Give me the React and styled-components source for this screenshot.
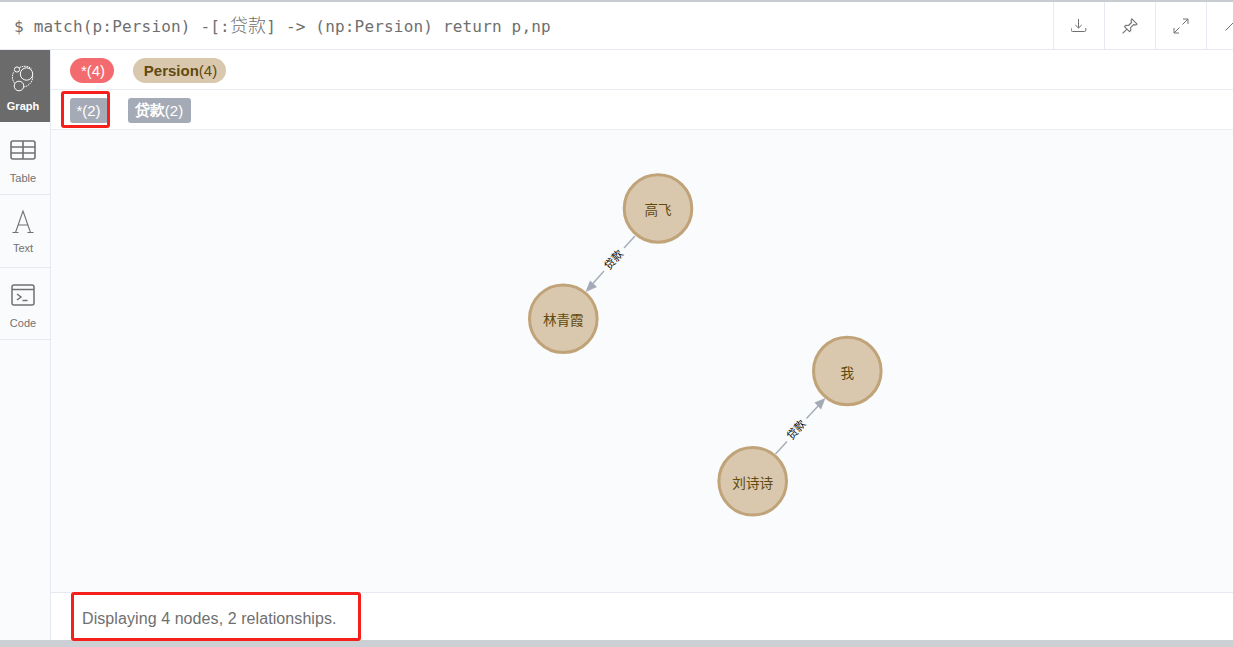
import React from "react";
import styled, { createGlobalStyle } from "styled-components";

const GlobalStyle = createGlobalStyle`
  html, body {
    margin: 0;
    height: 647px;
    overflow: hidden;
    background: #fff;
  }
  body {
    font-family: "Liberation Sans", Arial, sans-serif;
  }
`;

const Frame = styled.div`
  width: 1257px;
  height: 647px;
  display: flex;
  flex-direction: column;
  border-top: 2px solid #c9ccd1;
  border-bottom: 7px solid #ccd0d4;
  box-sizing: border-box;
  background: #fff;
`;

const Header = styled.header`
  height: 47px;
  flex: none;
  display: flex;
  align-items: stretch;
  border-bottom: 1px solid #e6e9ef;
  box-sizing: content-box;
`;

const Query = styled.div`
  flex: 1;
  padding-left: 14px;
  font: 16px/50px "DejaVu Sans Mono", "Noto Sans CJK SC", monospace;
  letter-spacing: 0.18px;
  color: #6f6f6f;
  white-space: nowrap;
`;

const Cjk = styled.span`
  font: 300 18px "Noto Sans CJK SC", sans-serif;
`;

const Action = styled.div`
  width: 50px;
  flex: none;
  display: flex;
  align-items: center;
  justify-content: center;
  border-left: 1px solid #e6e9ef;
  color: #717172;
`;

const Body = styled.div`
  flex: 1;
  min-height: 0;
  display: flex;
`;

const Sidebar = styled.nav`
  width: 51px;
  flex: none;
  box-sizing: border-box;
  background: #f9fbfd;
  border-right: 1px solid #e6e9ef;
`;

const Tab = styled.div`
  height: ${(p) => p.$h}px;
  box-sizing: border-box;
  display: flex;
  flex-direction: column;
  align-items: center;
  padding: ${(p) => p.$top}px 4px 0 0;
  background: ${(p) => (p.$active ? "#6b6b6b" : "transparent")};
  color: ${(p) => (p.$active ? "#fff" : "#717172")};
  border-bottom: ${(p) => (p.$active ? "none" : "1px solid #e6e9ef")};
  svg {
    display: block;
    flex: none;
  }
`;

const TabLabel = styled.span`
  font-size: 11px;
  line-height: 13px;
  margin-top: ${(p) => p.$gap}px;
  font-weight: ${(p) => (p.$active ? 700 : 400)};
`;

const Main = styled.main`
  flex: 1;
  min-width: 0;
  display: flex;
  flex-direction: column;
`;

const LegendRow = styled.div`
  height: 40px;
  flex: none;
  display: flex;
  align-items: center;
  gap: ${(p) => p.$gap}px;
  padding: 2px 0 0 19px;
  box-sizing: border-box;
  border-bottom: 1px solid #e9ecf1;
`;

const Pill = styled.span`
  position: relative;
  height: 25px;
  display: inline-flex;
  align-items: center;
  justify-content: center;
  box-sizing: border-box;
  width: ${(p) => p.$w}px;
  padding: ${(p) => (p.$square ? "0 1px 0 0" : "0 0 0 2px")};
  border-radius: ${(p) => (p.$square ? "3px" : "13px")};
  background: ${(p) => p.$bg};
  color: ${(p) => p.$fg};
  font-size: 15px;
  white-space: nowrap;
  b {
    font-weight: 700;
  }
`;

const PillMarker = styled.i`
  position: absolute;
  left: -9px;
  right: -2px;
  top: -7px;
  bottom: -5px;
  border: 3px solid #f5201c;
  border-radius: 3px;
`;

const Canvas = styled.section`
  flex: 1;
  min-height: 0;
  background: #f9fbfd;
  svg {
    display: block;
    width: 100%;
    height: 100%;
  }
`;

const Footer = styled.footer`
  height: 48px;
  flex: none;
  box-sizing: border-box;
  border-top: 1px solid #e6e9ef;
  padding-left: 31px;
  display: flex;
  align-items: center;
  font-size: 16px;
  letter-spacing: 0.08px;
  color: #6f6f6f;
`;

const Status = styled.span`
  position: relative;
  padding-top: 4px;
`;

const StatusMarker = styled.i`
  position: absolute;
  left: -11px;
  right: -24px;
  top: -14px;
  bottom: -13px;
  border: 3px solid #f5201c;
  border-radius: 3px;
`;

const NodeCircle = styled.circle`
  fill: #d9c8ae;
  stroke: #c0a378;
  stroke-width: 3px;
`;

const NodeText = styled.text`
  font: 13.6px "Noto Sans CJK SC", sans-serif;
  fill: #604a0e;
  text-anchor: middle;
`;

const EdgeLine = styled.line`
  stroke: #a5abb6;
  stroke-width: 1.4px;
`;

const EdgeHead = styled.polygon`
  fill: #a5abb6;
`;

const EdgeText = styled.text`
  font: 11px "Noto Sans CJK SC", sans-serif;
  fill: #000;
  text-anchor: middle;
`;

// canvas starts at page x=51, y=130
const ox = 51;
const oy = 130;

const nodes = [
  { name: "高飞", x: 658, y: 208.5 },
  { name: "林青霞", x: 563.3, y: 318.7 },
  { name: "我", x: 847.3, y: 371 },
  { name: "刘诗诗", x: 752.7, y: 481.3 },
];

const edges = [
  { a: [635, 236], b: [624, 248], c: [604, 271], d: [592, 284.5], head: "585.5,292 590,280.5 597,287", lx: 614, ly: 260 },
  { a: [775.5, 454], b: [787, 441.5], c: [806.5, 418.5], d: [819, 405], head: "825.5,398 814.5,402.5 821,409.5", lx: 796.5, ly: 430 },
];

const GraphIcon = () => (
  <svg width="24" height="29" viewBox="0 0 24 29" fill="none" stroke="currentColor" strokeWidth="1">
    <circle cx="15.5" cy="10" r="6.2" />
    <circle cx="8" cy="22" r="4.8" />
    <circle cx="6" cy="5.5" r="2.6" />
    <path d="M8.5 3.5c4-2 9-1.6 12 1.4M21.6 12c.6 5-3 9.6-8.5 11M3.4 19C.6 15 .8 10.500 3.200 7.500" strokeDasharray="1.6 .8" />
  </svg>
);

const TableIcon = () => (
  <svg width="26" height="20" viewBox="0 0 26 20" fill="none" stroke="currentColor" strokeWidth="1.6">
    <rect x="1" y="1" width="24" height="18" rx="2" />
    <path d="M1 7h24M1 13h24M13 1v18" />
  </svg>
);

const TextIcon = () => (
  <svg width="22" height="24" viewBox="0 0 22 24" fill="none" stroke="currentColor" strokeWidth="1.100">
    <path d="M3.500 22.500L11 1l7.500 21.500M6 15h10M.5 22.500h6M15.500 22.500h6" />
  </svg>
);

const CodeIcon = () => (
  <svg width="24" height="22" viewBox="0 0 24 22" fill="none" stroke="currentColor" strokeWidth="1.500">
    <rect x="1" y="1" width="22" height="20" rx="2" />
    <path d="M1 5.500h22" />
    <path d="M6 10l4 3-4 3M11.500 16.500h5" />
  </svg>
);

const DownloadIcon = () => (
  <svg width="16" height="16" viewBox="0 0 16 16" fill="none" stroke="currentColor" strokeWidth="1">
    <path d="M7.500 1v9M4.300 7l3.200 3 3.200-3" />
    <path d="M.2 10v2.200c0 .8.500 1.300 1.300 1.300h12c.8 0 1.300-.5 1.300-1.300V10" />
  </svg>
);

const PinIcon = () => (
  <svg width="16" height="16" viewBox="0 0 16 16" fill="none" stroke="currentColor" strokeWidth="1.100" strokeLinejoin="round">
    <path d="M9.800.9l5.300 5.200-1.300.9-2.200-.4-3 3 .2 2.800-1.300 1.200-5-5 1.200-1.300 2.800.2 3-3-.4-2.200zM4.700 11.300L.6 15.400" />
  </svg>
);

const ExpandIcon = () => (
  <svg width="16" height="16" viewBox="0 0 16 16" fill="none" stroke="currentColor" strokeWidth="1">
    <path d="M9.500 6.500L15 1M10 1h5v5M6.500 9.500L1 15M1 10v5h5" />
  </svg>
);

const CollapseIcon = () => (
  <svg width="16" height="16" viewBox="0 0 16 16" fill="none" stroke="currentColor" strokeWidth="1">
    <path d="M1.500 12.500L9.500 4.500 16 11" />
  </svg>
);

export default function App() {
  return (
    <Frame>
      <GlobalStyle />
      <Header>
        <Query>
          $ match(p:Persion) -[:<Cjk>贷款</Cjk>] -&gt; (np:Persion) return p,np
        </Query>
        <Action><DownloadIcon /></Action>
        <Action><PinIcon /></Action>
        <Action><ExpandIcon /></Action>
        <Action><CollapseIcon /></Action>
      </Header>
      <Body>
        <Sidebar>
          <Tab $active $h={72} $top={14}>
            <GraphIcon />
            <TabLabel $active $gap={7}>Graph</TabLabel>
          </Tab>
          <Tab $h={73} $top={18}>
            <TableIcon />
            <TabLabel $gap={12}>Table</TabLabel>
          </Tab>
          <Tab $h={73} $top={15}>
            <TextIcon />
            <TabLabel $gap={8}>Text</TabLabel>
          </Tab>
          <Tab $h={72} $top={16}>
            <CodeIcon />
            <TabLabel $gap={11}>Code</TabLabel>
          </Tab>
        </Sidebar>
        <Main>
          <LegendRow $gap={19}>
            <Pill $w={44} $bg="#f36b6e" $fg="#fff">*(4)</Pill>
            <Pill $w={93} $bg="#d9c8ae" $fg="#604a0e"><b>Persion</b>(4)</Pill>
          </LegendRow>
          <LegendRow $gap={20}>
            <Pill $w={38} $square $bg="#a5abb6" $fg="#fff">
              *(2)
              <PillMarker />
            </Pill>
            <Pill $w={63} $square $bg="#a5abb6" $fg="#fff"><b>贷款</b>(2)</Pill>
          </LegendRow>
          <Canvas>
            <svg>
              <g transform={`translate(${-ox} ${-oy})`}>
                {edges.map((e, i) => (
                  <g key={i}>
                    <EdgeLine x1={e.a[0]} y1={e.a[1]} x2={e.b[0]} y2={e.b[1]} />
                    <EdgeLine x1={e.c[0]} y1={e.c[1]} x2={e.d[0]} y2={e.d[1]} />
                    <EdgeHead points={e.head} />
                    <EdgeText transform={`translate(${e.lx} ${e.ly}) rotate(-48)`} y="3.500">贷款</EdgeText>
                  </g>
                ))}
                {nodes.map((n) => (
                  <g key={n.name}>
                    <NodeCircle cx={n.x} cy={n.y} r="33.800" />
                    <NodeText x={n.x} y={n.y + 6.5}>{n.name}</NodeText>
                  </g>
                ))}
              </g>
            </svg>
          </Canvas>
          <Footer>
            <Status>
              Displaying 4 nodes, 2 relationships.
              <StatusMarker />
            </Status>
          </Footer>
        </Main>
      </Body>
    </Frame>
  );
}
